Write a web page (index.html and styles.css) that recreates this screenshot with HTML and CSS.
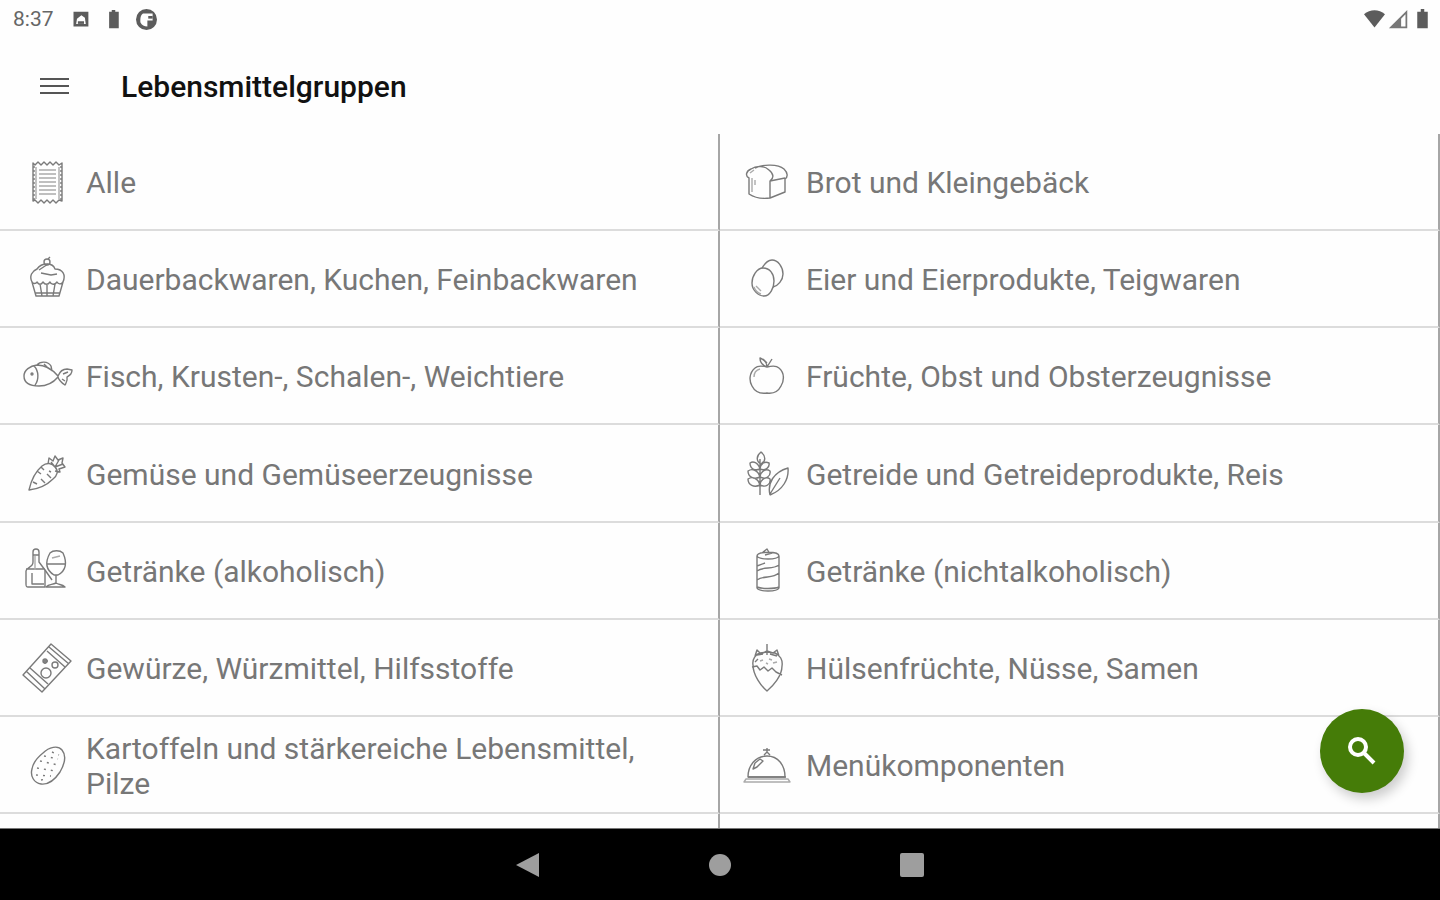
FILE: index.html
```html
<!DOCTYPE html>
<html lang="de">
<head>
    <meta charset="UTF-8">
    <meta name="viewport" content="width=device-width, initial-scale=1.0">
    <title>Lebensmittelgruppen</title>
    <link rel="stylesheet" href="styles.css">
</head>
<body>
<div class="status-bar">
    <span class="clock">8:37</span>
    <svg class="status-icon" viewBox="0 0 24 24"><path fill-rule="evenodd" d="M4 3h17v17H4zM7 17h11l-1-7-4-3-5 4z"/><path d="M9 14h7v3H9z"/></svg>
    <svg class="status-icon" viewBox="0 0 24 24"><path d="M10 1h4v2h4v19H7V3h3z"/></svg>
    <svg class="status-icon" viewBox="0 0 24 24"><path fill-rule="evenodd" d="M12 0a12 12 0 1 0 0 24 12 12 0 0 0 0-24zM8 5h11v8h-6v7a9 9 0 0 1-8-5c0-5 0-8 3-10z"/><path d="M14 8h5v3h-5z"/></svg>
    <div class="status-right">
        <svg class="status-icon" viewBox="0 0 24 24"><path d="M0 6c7-6 17-6 24 0L12 21z"/></svg>
        <svg class="status-icon signal" viewBox="0 0 24 24"><path fill-rule="evenodd" d="M1 22 22 1v21zM15 11v9h5V6z"/></svg>
        <svg class="status-icon" viewBox="0 0 24 24"><path d="M10 0h4v3h4v19H6V3h4z"/></svg>
    </div>
</div>

<header class="toolbar">
    <button type="button" class="menu-btn" aria-label="Menü">
        <span></span><span></span><span></span>
    </button>
    <h1>Lebensmittelgruppen</h1>
</header>

<main>
    <ul class="groups">
        <li><a href="#alle">
            <svg class="icon" viewBox="0 0 50 50">
                <path d="M11 5l2 2 3-3 3 3 3-3 3 3 3-3 3 3 3-3 3 3 3-2v38l-3-1-3 3-3-3-3 3-3-3-3 3-3-3-3 3-3-3-2 1z"/>
                <path stroke-dasharray="2 2" d="M12 8v34M39 8v34"/>
                <path class="soft" d="M14 9v32M37 9v32M17 12h17M17 16h17M17 20h17M17 24h17M17 28h17M17 32h17M17 36h17"/>
            </svg>
            <span>Alle</span></a></li>
        <li><a href="#brot">
            <svg class="icon" viewBox="0 0 50 50">
                <path d="M7 20c-4-2-3-7 2-9 6-4 14-3 18 1 5 4 5 8 1 11v17c-7 1-15 0-21-4zM13 10c8-4 23-4 29 1 4 4 4 8 1 10v13l-15 6M28 23l15-3"/>
                <path class="soft" d="M10 20v14M13 22v5M8 15l4-3"/>
            </svg>
            <span>Brot und Kleingebäck</span></a></li>
        <li><a href="#kuchen">
            <svg class="icon" viewBox="0 0 50 50">
                <path d="M10 27c-3-6 0-11 5-13 2-3 5-5 10-5 4 0 7 2 8 5 8 0 11 6 8 13-2 3-5 2-6 0-2 3-6 3-7 0-2 3-5 3-7 0-2 3-4 3-6 0-1 2-4 2-5 0zM10 27l4 14h23l4-14M18 29l2 12M25 29v12M33 29l-2 12M13 38h25"/>
                <circle cx="25" cy="7" r="3"/><path d="M26 4l2-2M17 15l9-6M19 18l10 2 6-1"/>
            </svg>
            <span>Dauerbackwaren, Kuchen, Feinbackwaren</span></a></li>
        <li><a href="#eier">
            <svg class="icon" viewBox="0 0 50 50">
                <path d="M21 13c7 0 11 6 11 13s-4 15-10 15-12-6-12-13 5-15 11-15z"/>
                <path d="M20 13c3-5 6-8 10-8 6 0 11 7 11 14 0 6-5 12-10 13"/>
                <path class="soft" d="M12 32c1 3 4 6 7 7M14 31l5 5"/>
            </svg>
            <span>Eier und Eierprodukte, Teigwaren</span></a></li>
        <li><a href="#fisch">
            <svg class="icon" viewBox="0 0 50 50">
                <path d="M36 25c-5 6-11 9-19 9-9 0-15-3-15-10 0-6 6-10 13-11 9 0 15 4 21 11zM12 14c5 5 5 14 1 19M15 13c3-4 11-4 14 1l1 5M36 24c2-5 6-7 9-7l5 1c0 4-2 5-5 7 1 4-1 6-2 8-3-2-6-4-7-8zM41 22l5-2M40 27l3 2M22 12l4 4"/>
                <circle cx="10" cy="22" r="1"/>
            </svg>
            <span>Fisch, Krusten-, Schalen-, Weichtiere</span></a></li>
        <li><a href="#obst">
            <svg class="icon" viewBox="0 0 50 50">
                <path d="M25 15c4-1 9-2 12 1 6 5 5 13 2 18-3 6-7 8-14 7-7 1-12-1-15-7-3-5-3-13 3-18 3-3 8-2 12-1zM25 15c0-4-2-7-7-9 0 4 2 7 7 9l5-8M25 11l-4-4"/>
                <path class="soft" d="M12 25c0-4 2-7 6-8"/>
            </svg>
            <span>Früchte, Obst und Obsterzeugnisse</span></a></li>
        <li><a href="#gemuese">
            <svg class="icon" viewBox="0 0 50 50">
                <path d="M7 41c2-9 6-18 13-24 5-4 10-3 13 1 4 4 2 9-2 12-6 6-15 10-24 11zM26 15l1-6 4 3 2-5 3 4 5-2-1 5 3 4-6 2 1 3-5-1M29 13l4 5 8-3M33 18l4-7M15 22l4 3M19 18l3 3M11 33l4 2M23 34l-4-4M29 29l-4-4M27 22l2 1"/>
            </svg>
            <span>Gemüse und Gemüseerzeugnisse</span></a></li>
        <li><a href="#getreide">
            <svg class="icon" viewBox="0 0 50 50">
                <path d="M18 46V10M19 3c5 4 5 9 0 12-5-3-5-8 0-12zM18 20c-2-7-7-8-10-6 0 6 5 8 10 6zM18 20c1-6 5-8 9-6 1 5-4 8-9 6zM18 28c-2-7-8-9-12-6 0 6 6 9 12 6zM18 28c1-6 6-9 10-6 1 5-4 9-10 6zM18 36c-2-7-8-9-12-6 0 6 6 9 12 6zM18 36c1-6 6-9 10-6 1 5-4 9-10 6zM28 46c-3-12 4-23 18-27 1 11-5 22-18 27M28 45l10-16"/>
            </svg>
            <span>Getreide und Getreideprodukte, Reis</span></a></li>
        <li><a href="#alkohol">
            <svg class="icon" viewBox="0 0 50 50">
                <path d="M11 6c0-4 6-4 6 0v10l6 8v17H6c-2 0-2-1-2-3V25c0-4 7-3 7-9zM11 9h6M4 23h19M10 27v11h12"/>
                <path d="M28 7c3-3 10-3 13 0 4 9 4 17-5 22h-4c-8-5-9-13-4-22zM25 18h18M34 29v9M24 41c3-3 6-2 10-4 3 2 6 1 9 4zM23 24l7 10"/>
                <path class="soft" d="M30 12l8-2M13 10v14"/>
            </svg>
            <span>Getränke (alkoholisch)</span></a></li>
        <li><a href="#alkoholfrei">
            <svg class="icon" viewBox="0 0 50 50">
                <path d="M15 10c0-5 22-5 22 0v32c-2 4-20 4-22 0zM15 10c2 4 20 4 22 0M20 7l5-4 3 5M23 9l7-2M15 25c7-5 15-1 22-6M15 20l8-3M15 34c7-5 15-1 22-7M15 41c5 2 17 2 22 0"/>
            </svg>
            <span>Getränke (nichtalkoholisch)</span></a></li>
        <li><a href="#gewuerze">
            <svg class="icon" viewBox="0 0 50 50">
                <path d="M29 1l20 17-29 31L1 32zM27 4l20 17M4 28l19 18M25 8l18 16M8 25l18 16"/>
                <circle cx="24" cy="30" r="5"/><circle cx="33" cy="22" r="3"/><circle cx="23" cy="18" r="2"/>
                <path d="M23 16v5M21 18h5"/>
            </svg>
            <span>Gewürze, Würzmittel, Hilfsstoffe</span></a></li>
        <li><a href="#nuesse">
            <svg class="icon" viewBox="0 0 50 50">
                <path d="M11 22c-1-6 3-11 7-12l7-1 8 1c5 2 8 7 7 13 0 10-9 20-15 25-6-5-14-16-14-26zM10 24l5-1 3 4 4-3 4 4 4-3 4 4 6 3M25 1v11M13 13l2-6 4 4 6-3 6 2 4-3 2 6M15 12l6-1M28 11l7 2M16 16l-3 3"/>
                <path class="soft" d="M18 18l3-1M27 16l3 1M31 20l4-1M24 20l2 1"/>
            </svg>
            <span>Hülsenfrüchte, Nüsse, Samen</span></a></li>
        <li><a href="#kartoffeln">
            <svg class="icon" viewBox="0 0 50 50">
                <path d="M21 12c6-6 15-8 19-3 5 6 2 15-2 22-4 6-11 13-19 12-7-1-11-8-9-15 1-6 6-12 11-16z"/>
                <path stroke-dasharray="2 5" d="M22 15l14 3M18 20l18 4M15 27l18 3M14 34l15 1M30 11l7 3M19 39l6-1"/>
            </svg>
            <span>Kartoffeln und stärkereiche Lebensmittel, Pilze</span></a></li>
        <li><a href="#menue">
            <svg class="icon" viewBox="0 0 50 50">
                <path d="M6 36c0-12 8-21 19-21s18 9 18 21zM22 14l3-3 3 3M25 11V7M21 9h7"/>
                <path d="M6 36h38"/>
                <path class="soft" d="M4 38h42l2 3H2z"/>
                <path d="M11 28l2-6 5-4 3 2-6 6z"/>
            </svg>
            <span>Menükomponenten</span></a></li>
        <li></li>
        <li></li>
    </ul>

    <button type="button" class="search-btn" aria-label="Suchen">
        <svg viewBox="0 0 28 28"><circle cx="10" cy="10" r="8"/><path d="M16 16l10 10"/></svg>
    </button>
</main>

<nav class="system-nav">
    <button type="button" aria-label="Zurück"><svg viewBox="0 0 24 24"><path d="M23 0v24L0 12z"/></svg></button>
    <button type="button" aria-label="Startseite"><svg viewBox="0 0 24 24"><circle cx="12" cy="12" r="11"/></svg></button>
    <button type="button" aria-label="Übersicht"><svg viewBox="0 0 24 24"><rect width="24" height="24" rx="2"/></svg></button>
</nav>
</body>
</html>
```
FILE: styles.css
```css
:root {
    --primary-color: #457c08;
    --text-color: #777;
    --icon-color: #7a7a7a;
    --line-color: #dcdcdc;
    --divider-color: #a6a6a6;
}

* {
    box-sizing: border-box;
}

body {
    margin: 0;
    height: 100vh;
    display: flex;
    flex-direction: column;
    background: #fefefe;
    font-family: Roboto, sans-serif;
    overflow: hidden;
}

button {
    border: none;
    padding: 0;
    background: none;
    cursor: pointer;
}

.status-bar {
    display: flex;
    align-items: center;
    gap: 12px;
    height: 38px;
    padding: 0 7px 0 13px;
    color: #666;
}

.clock {
    font-size: 21px;
    margin-right: 4px;
}

.status-icon {
    width: 21px;
    height: 21px;
    fill: #5c5c5c;
}

.status-icon.signal {
    fill: #777;
}

.status-right {
    display: flex;
    gap: 3px;
    margin-left: auto;
}

.toolbar {
    display: flex;
    align-items: center;
    gap: 52px;
    height: 96px;
    padding-left: 40px;
}

.menu-btn {
    display: flex;
    flex-direction: column;
    gap: 5px;
    width: 29px;
}

.menu-btn span {
    height: 2px;
    background: #555;
}

h1 {
    margin: 0;
    font-size: 30px;
    font-weight: 500;
    color: #111;
}

main {
    position: relative;
    flex: 1;
    min-height: 0;
    border-bottom: 1px solid #777;
}

.groups {
    display: grid;
    grid-template-columns: 1fr 1fr;
    grid-auto-rows: 14%;
    height: 100%;
    margin: 0;
    padding: 0;
    list-style: none;
    overflow: hidden;
}

.groups li {
    border-right: 2px solid var(--divider-color);
    border-bottom: 2px solid var(--line-color);
}

.groups a {
    display: flex;
    align-items: center;
    gap: 14px;
    height: 100%;
    padding: 2px 70px 0 22px;
    color: var(--text-color);
    font-size: 30px;
    line-height: 35px;
    text-decoration: none;
}

.icon {
    flex: none;
    width: 50px;
    height: 50px;
    fill: none;
    stroke: var(--icon-color);
    stroke-width: 1.4;
    stroke-linejoin: round;
    overflow: visible;
}

.icon .soft {
    stroke: #aaa;
}

.search-btn {
    position: absolute;
    right: 36px;
    bottom: 35px;
    display: flex;
    align-items: center;
    justify-content: center;
    width: 84px;
    height: 84px;
    border-radius: 50%;
    background: var(--primary-color);
    box-shadow: 4px 6px 12px rgba(0, 0, 0, 0.2);
}

.search-btn svg {
    width: 28px;
    height: 28px;
    fill: none;
    stroke: #fff;
    stroke-width: 4;
}

.system-nav {
    display: flex;
    justify-content: center;
    height: 71px;
    background: #000;
}

.system-nav button {
    display: flex;
    align-items: center;
    justify-content: center;
    width: 192px;
}

.system-nav svg {
    width: 24px;
    height: 24px;
    fill: #9e9e9e;
}
```
